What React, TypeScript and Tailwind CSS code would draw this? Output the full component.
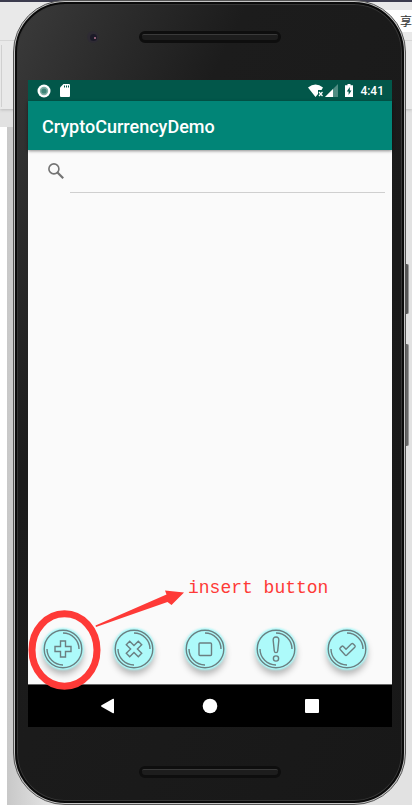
import React from "react";

const glyphs: { label: string; shape: React.ReactNode }[] = [
  {
    label: "Insert",
    shape: <path d="M17.500 12h5v5.500h5.500v5h-5.500v5.500h-5v-5.500h-5.500v-5h5.500z" />,
  },
  {
    label: "Delete",
    shape: (
      <path
        transform="rotate(45 20 20)"
        d="M17.600 11.500h4.800v6.100h6.100v4.800h-6.100v6.100h-4.800v-6.100h-6.100v-4.800h6.100z"
      />
    ),
  },
  { label: "Stop", shape: <rect x="14" y="14" width="12.500" height="12.500" rx="1" /> },
  {
    label: "Alert",
    shape: (
      <>
        <path d="M20 8c-2 0-3 1.300-2.800 3.500l1.100 10.500c.2 2.200 3.200 2.200 3.400 0l1.100-10.500C23 9.300 22 8 20 8z" />
        <circle cx="20" cy="29.500" r="2.600" />
      </>
    ),
  },
  {
    label: "Confirm",
    shape: (
      <path d="M13.200 20.500q-.8-1 .2-1.900l1.400-1.200q.8-.7 1.600.2l2.600 2.600 5.500-5.400q.9-.8 1.800.1l1.500 1.500q.8.9 0 1.800l-7.900 7.800q-.9.8-1.800 0z" />
    ),
  },
];

function RoundButton({ label, shape }: { label: string; shape: React.ReactNode }) {
  return (
    <button
      type="button"
      aria-label={label}
      className="size-10 shrink-0 rounded-full bg-[#adfafa] shadow-[0_0_2px_1px_#adfafa,0_5px_7px_rgba(0,0,0,0.3)]"
    >
      <svg viewBox="0 0 40 40" className="size-10" fill="none" stroke="#6b7f81" strokeWidth="1.400">
        <circle cx="20" cy="20" r="18.800" />
        <path d="M20 4a16 16 0 0 1 16 16M20 36a16 16 0 0 1-16-16" />
        {shape}
      </svg>
    </button>
  );
}

function Speaker() {
  return (
    <div className="h-3 w-[142px] rounded-full border-3 border-[#0e0e0e] bg-[#1d1d1d]">
      <div className="h-1 rounded-full border-t border-[#3a3a3a]" />
    </div>
  );
}

function StatusBar() {
  return (
    <div className="flex h-[21px] items-center bg-[#02574a] pl-[9px] pr-2 text-white">
      <svg viewBox="0 0 14 14" className="size-[14px]">
        <circle cx="7" cy="7" r="6.500" fill="#fff" />
        <circle cx="7" cy="7" r="4.200" fill="#7fb0a6" />
        <circle cx="7" cy="7" r="2.600" fill="#3f8578" />
      </svg>
      <svg viewBox="0 0 10 13" className="ml-[9px] h-[13px] w-[10px]">
        <path d="M3.500 0H9q1 0 1 1v11q0 1-1 1H1q-1 0-1-1V3.500z" fill="#fff" />
        <path d="M4.500 1.500v2M6.500 1.500v2M8.500 1.500v2" stroke="#02574a" />
      </svg>
      <svg viewBox="0 0 16 13" className="ml-auto h-[13px] w-4">
        <path d="M0 3.500Q7.500-2.500 15 3.500L13.500 6H10v4l-2.500 3z" fill="#fff" />
        <path d="M11 8l3.500 4M14.500 8L11 12" stroke="#fff" strokeWidth="1.200" />
      </svg>
      <svg viewBox="0 0 13 13" className="ml-px h-[13px] w-[13px]">
        <path d="M13 0v13H0z" fill="#4f8c82" />
        <path d="M8 5v8H0z" fill="#fff" />
      </svg>
      <svg viewBox="0 0 8 13" className="ml-[7px] h-[13px] w-2">
        <path d="M2.500 0h3v1.200H8V13H0V1.200h2.500z" fill="#fff" />
        <path d="M4.800 3L1.800 7.500h1.800V11l2.900-4.500H4.800z" fill="#02574a" />
      </svg>
      <span className="ml-[7px] text-xs font-medium leading-none">4:41</span>
    </div>
  );
}

function NavBar() {
  return (
    <nav className="flex h-[43px] items-center justify-between border-t border-[#666] bg-black px-[72px]">
      <button type="button" aria-label="Back">
        <svg viewBox="0 0 16 16" className="size-4" fill="#fff">
          <path d="M1.500 7.300L13 .8q1-.5 1 .6v13.200q0 1.100-1 .6L1.500 8.700q-1-.7 0-1.400z" />
        </svg>
      </button>
      <button type="button" aria-label="Home">
        <svg viewBox="0 0 16 16" className="size-4" fill="#fff">
          <circle cx="8" cy="8" r="7.300" />
        </svg>
      </button>
      <button type="button" aria-label="Recent apps">
        <svg viewBox="0 0 16 16" className="size-4" fill="#fff">
          <rect x="1" y="1" width="14" height="14" rx="1" />
        </svg>
      </button>
    </nav>
  );
}

function Annotation() {
  return (
    <div className="pointer-events-none absolute bottom-[37px] left-0 h-[110px] w-full text-[#fe3a37]">
      <svg viewBox="0 0 160 110" className="absolute left-0 top-0 h-[110px] w-40 overflow-visible">
        <ellipse cx="36.500" cy="70" rx="32.500" ry="36.200" fill="none" stroke="currentColor" strokeWidth="7" />
        <path d="M67.500 45.500L138.500 14.500 137 10.500 156 12.500 143.500 25 139.500 22 68 47z" fill="currentColor" />
      </svg>
      <p className="absolute left-40 top-0 font-['Liberation_Mono',monospace] text-lg leading-4">
        insert button
      </p>
    </div>
  );
}

export default function App() {
  return (
    <div className="relative flex min-h-screen flex-col overflow-hidden bg-[#e2e2e2] font-[Roboto,sans-serif]">
      <div className="absolute inset-x-0 top-0 h-[109px] border-t-2 border-[#3c3c4e] bg-[#e9e9e9] shadow-[0_1px_3px_#bbb]">
        <div className="mt-[38px] h-px bg-[#d6d6d6]" />
        <div className="ml-px mt-1 h-[62px] w-px bg-[#d0d0d0]" />
      </div>
      <div className="absolute bottom-0 left-0 top-[127px] w-[7px] bg-white" />
      <div className="absolute bottom-0 left-[7px] top-[127px] w-10 bg-linear-to-r from-[#c8c8c8] to-[#e2e2e2]" />
      <div className="absolute right-0 top-[10px] h-[22px] w-7 bg-white text-right font-['Noto_Sans_CJK_SC',sans-serif] text-xs leading-[22px] text-[#333]">
        享
      </div>

      <div className="absolute right-[3px] top-[264px] h-[50px] w-1 rounded-r-xs border-r border-[#999] bg-[#555]" />
      <div className="absolute right-[3px] top-[344px] h-[102px] w-1 rounded-r-xs border-r border-[#999] bg-[#666]" />

      <div className="relative ml-[13px] mr-[6px] flex flex-1 flex-col rounded-[52px] border border-[#555] bg-[#c4c4c4] p-px">
        <div className="flex flex-1 flex-col rounded-[50px] border-2 border-[#0a0a0a] bg-linear-to-br from-[#3b3b3b] via-[#1c1c1c] via-30% to-[#181818] pl-[11px] pr-[10px] shadow-[inset_0_0_0_1px_#363636]">
          <header className="relative flex h-[76px] justify-center pt-[27px]">
            <Speaker />
            <div className="absolute left-[59px] top-[27px] flex size-3 items-center justify-center rounded-full bg-[#2e2b33]">
              <div className="size-[7px] rounded-full bg-[#1c1a28]">
                <div className="ml-1 mt-[3px] size-[2px] rounded-full bg-[#b77a92]" />
              </div>
            </div>
          </header>

          <main className="relative flex flex-1 flex-col bg-[#fafafa]">
            <StatusBar />
            <div className="relative flex h-[49px] items-center bg-[#018577] pl-[14px] shadow-[0_1px_3px_rgba(0,0,0,0.45)]">
              <h1 className="pt-[2px] text-lg font-medium text-white">CryptoCurrencyDemo</h1>
            </div>
            <label className="flex h-[43px] pl-5 pr-[7px]">
              <svg viewBox="0 0 16 16" className="mt-[13px] size-4 shrink-0" fill="none" stroke="#737373">
                <circle cx="5.900" cy="5.900" r="5" strokeWidth="1.600" />
                <path d="M9.500 9.500L15.200 15.200" strokeWidth="2.200" />
              </svg>
              <input
                type="search"
                aria-label="Search"
                className="ml-[6px] min-w-0 flex-1 border-b border-[#cfcfcf] bg-transparent outline-none"
              />
            </label>
            <div className="mt-auto flex justify-between pb-[15px] pl-[15px] pr-[25px]">
              {glyphs.map((g) => (
                <RoundButton key={g.label} label={g.label} shape={g.shape} />
              ))}
            </div>
            <NavBar />
            <Annotation />
          </main>

          <footer className="flex h-[74px] justify-center pt-[39px]">
            <Speaker />
          </footer>
        </div>
      </div>
    </div>
  );
}
